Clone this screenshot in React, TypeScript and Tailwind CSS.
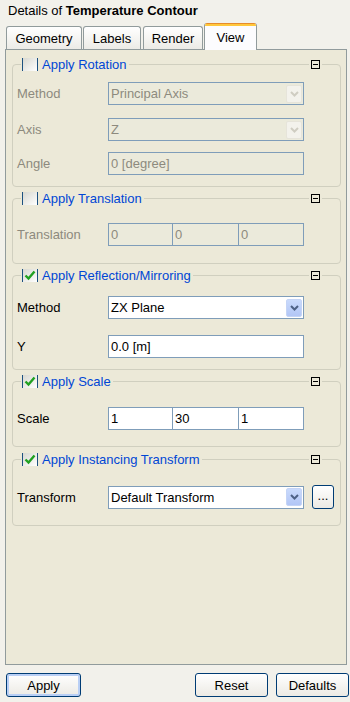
import type { ReactNode } from 'react'

const FONT = "'Liberation Sans', Arial, sans-serif"

function Chevron({ disabled }: { disabled?: boolean }) {
  return (
    <svg width="9" height="6" viewBox="0 0 9 6">
      <path d="M1 1 L4.5 4.5 L8 1" fill="none" stroke={disabled ? '#cfcdc2' : '#4d6185'} strokeWidth="2" />
    </svg>
  )
}

function Select({ value, disabled }: { value: string; disabled?: boolean }) {
  return (
    <div
      className={`w-[196px] h-[23px] border border-[#7f9db9] flex items-center justify-between ${
        disabled ? 'bg-[#ebeadb] text-[#8d8a7e]' : 'bg-white text-black'
      }`}
    >
      <span className="pl-[2px]">{value}</span>
      <div
        className={`w-[16px] h-[18px] mr-[1px] flex items-center justify-center rounded-[2px] ${
          disabled
            ? 'bg-[#f3f2ec] border border-[#e6e4da]'
            : 'bg-gradient-to-b from-[#c9dafc] to-[#b2c6f6] border border-[#c4d4f6]'
        }`}
      >
        <Chevron disabled={disabled} />
      </div>
    </div>
  )
}

function Input({ value, disabled, className = 'w-[196px]' }: { value: string; disabled?: boolean; className?: string }) {
  return (
    <div
      className={`${className} h-[23px] border border-[#7f9db9] flex items-center pl-[2px] ${
        disabled ? 'bg-[#ebeadb] text-[#8d8a7e]' : 'bg-white text-black'
      }`}
    >
      {value}
    </div>
  )
}

function Triple({ values, disabled }: { values: string[]; disabled?: boolean }) {
  return (
    <div className="flex w-[196px]">
      <Input value={values[0]} disabled={disabled} className="w-[65px]" />
      <Input value={values[1]} disabled={disabled} className="w-[67px] -ml-px" />
      <Input value={values[2]} disabled={disabled} className="w-[66px] -ml-px" />
    </div>
  )
}

function CheckBox({ checked }: { checked?: boolean }) {
  return (
    <div className="w-[16px] h-[13px] border-x border-[#1c5180] bg-gradient-to-br from-[#d8d8d0] to-white flex items-center justify-center">
      {checked && (
        <svg width="12" height="11" viewBox="0 0 12 11">
          <path d="M1.5 5.5 L4.5 8.5 L10.5 1.5" fill="none" stroke="#21a121" strokeWidth="2.4" />
        </svg>
      )}
    </div>
  )
}

function Row({ label, disabled, children, className }: { label: string; disabled?: boolean; children: ReactNode; className: string }) {
  return (
    <div className={`flex items-center ${className}`}>
      <div className={`w-[95px] pl-[4px] ${disabled ? 'text-[#8d8a7e]' : 'text-black'}`}>{label}</div>
      {children}
    </div>
  )
}

function Group({ title, checked, className, children }: { title: string; checked?: boolean; className: string; children: ReactNode }) {
  return (
    <div className={`ml-[6px] w-[329px] border border-[#d0cfbf] rounded-[4px] ${className}`}>
      <div className="flex items-center h-[16px] -mt-[9px]">
        <div className="ml-[8px] pl-[1px] pr-[2px] bg-[#ece9d8] flex items-center gap-[4px]">
          <CheckBox checked={checked} />
          <span className="text-[#0046d5]">{title}</span>
        </div>
        <div className="flex-1" />
        <div className="px-[2px] bg-[#ece9d8] mr-[18px]">
          <div className="w-[9px] h-[9px] border border-black flex items-center justify-center">
            <div className="w-[5px] h-px bg-black" />
          </div>
        </div>
      </div>
      {children}
    </div>
  )
}

function Tab({ label, className }: { label: string; className: string }) {
  return (
    <div
      className={`h-[23px] border-t border-x border-[#919b9c] rounded-t-[3px] bg-gradient-to-b from-white to-[#ecebe6] flex items-center justify-center ${className}`}
    >
      {label}
    </div>
  )
}

function Button({ label, focused, className }: { label: string; focused?: boolean; className: string }) {
  return (
    <div
      className={`h-[24px] border border-[#003c74] rounded-[3px] bg-gradient-to-b from-white to-[#eceae4] flex items-center justify-center ${
        focused ? 'shadow-[inset_0_0_0_2px_#b9cff5]' : ''
      } ${className}`}
    >
      {label}
    </div>
  )
}

export default function App() {
  return (
    <div className="w-[350px] h-[702px] bg-[#f2f1eb] text-[13px] leading-none text-black overflow-hidden" style={{ fontFamily: FONT }}>
      {/* Title */}
      <div className="h-[23px] pl-[8px] pt-[4px]">
        Details of <span className="font-bold">Temperature Contour</span>
      </div>

      {/* Tabs */}
      <div className="flex items-end h-[26px] pl-[6px]">
        <Tab label="Geometry" className="w-[76px]" />
        <Tab label="Labels" className="w-[58px] ml-[1px]" />
        <Tab label="Render" className="w-[60px] ml-[2px]" />
        <div className="relative z-10 w-[53px] h-[27px] -mb-px ml-[1px] border-x border-[#919b9c] rounded-t-[3px] bg-[#fcfcfe] flex flex-col overflow-hidden">
          <div className="h-px bg-[#e68b2c]" />
          <div className="h-[2px] bg-[#ffc73c]" />
          <div className="flex-1 flex items-center justify-center pb-[2px]">View</div>
        </div>
      </div>

      {/* Panel */}
      <div className="ml-[5px] w-[342px] h-[616px] border border-[#919b9c] bg-[#ece9d8] pt-[14px]">
        <Group title="Apply Rotation" className="pb-[11px]">
          <Row label="Method" disabled className="mt-[10px]">
            <Select value="Principal Axis" disabled />
          </Row>
          <Row label="Axis" disabled className="mt-[13px]">
            <Select value="Z" disabled />
          </Row>
          <Row label="Angle" disabled className="mt-[11px]">
            <Input value="0 [degree]" disabled />
          </Row>
        </Group>

        <Group title="Apply Translation" className="mt-[11px] pb-[17px]">
          <Row label="Translation" disabled className="mt-[17px]">
            <Triple values={['0', '0', '0']} disabled />
          </Row>
        </Group>

        <Group title="Apply Reflection/Mirroring" checked className="mt-[11px] pb-[11px]">
          <Row label="Method" className="mt-[13px]">
            <Select value="ZX Plane" />
          </Row>
          <Row label="Y" className="mt-[16px]">
            <Input value="0.0 [m]" />
          </Row>
        </Group>

        <Group title="Apply Scale" checked className="mt-[11px] pb-[16px]">
          <Row label="Scale" className="mt-[18px]">
            <Triple values={['1', '30', '1']} />
          </Row>
        </Group>

        <Group title="Apply Instancing Transform" checked className="mt-[12px] pb-[16px]">
          <Row label="Transform" className="mt-[18px]">
            <Select value="Default Transform" />
            <div className="ml-[8px] w-[22px] h-[24px] border border-[#003c74] rounded-[3px] bg-gradient-to-b from-white to-[#eceae4] flex items-end justify-center pb-[6px] text-[13px]">
              ...
            </div>
          </Row>
        </Group>
      </div>

      {/* Bottom buttons */}
      <div className="flex mt-[8px] pl-[6px]">
        <Button label="Apply" focused className="w-[75px]" />
        <div className="flex-1" />
        <Button label="Reset" className="w-[73px]" />
        <Button label="Defaults" className="w-[73px] ml-[8px] mr-[1px]" />
      </div>
    </div>
  )
}
